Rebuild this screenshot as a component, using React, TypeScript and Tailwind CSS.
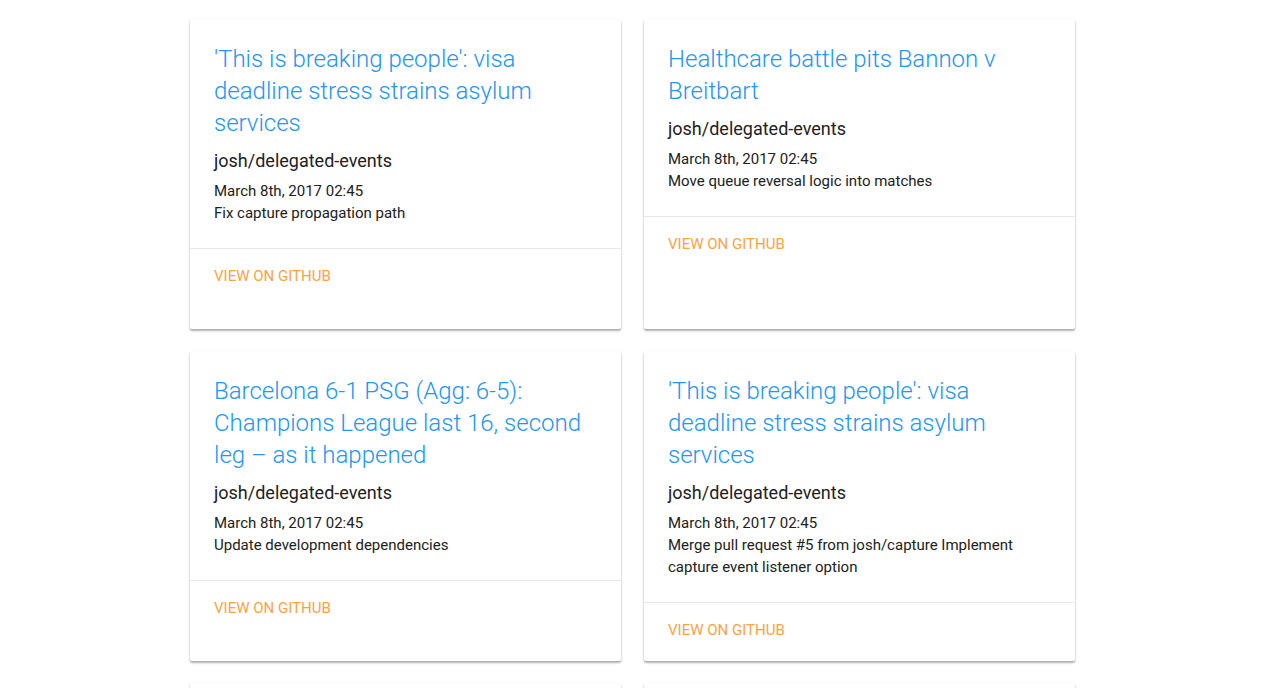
import React from "react";

type Commit = {
  title: string;
  repo: string;
  date: string;
  message: string;
};

const commits: Commit[] = [
  {
    title: "'This is breaking people': visa deadline stress strains asylum services",
    repo: "josh/delegated-events",
    date: "March 8th, 2017 02:45",
    message: "Fix capture propagation path",
  },
  {
    title: "Healthcare battle pits Bannon v Breitbart",
    repo: "josh/delegated-events",
    date: "March 8th, 2017 02:45",
    message: "Move queue reversal logic into matches",
  },
  {
    title: "Barcelona 6-1 PSG (Agg: 6-5): Champions League last 16, second leg – as it happened",
    repo: "josh/delegated-events",
    date: "March 8th, 2017 02:45",
    message: "Update development dependencies",
  },
  {
    title: "'This is breaking people': visa deadline stress strains asylum services",
    repo: "josh/delegated-events",
    date: "March 8th, 2017 02:45",
    message: "Merge pull request #5 from josh/capture Implement capture event listener option",
  },
  {
    title: "Healthcare battle pits Bannon v Breitbart",
    repo: "josh/delegated-events",
    date: "March 8th, 2017 02:45",
    message: "Move queue reversal logic into matches",
  },
  {
    title: "Barcelona 6-1 PSG (Agg: 6-5): Champions League last 16, second leg – as it happened",
    repo: "josh/delegated-events",
    date: "March 8th, 2017 02:45",
    message: "Update development dependencies",
  },
];

function CommitCard({ commit }: { commit: Commit }) {
  return (
    <div className="flex flex-col min-h-[310px] bg-white rounded-[2px] shadow-[0_1px_3px_rgba(0,0,0,0.12),0_2px_2px_rgba(0,0,0,0.26)]">
      <div className="px-6 pt-6 pb-[24px]">
        <h2 className="text-[24px] leading-[32px] font-light text-[#2196f3]">{commit.title}</h2>
        <h3 className="mt-[10px] text-[18px] leading-[24px] text-[#212121]">{commit.repo}</h3>
        <div className="mt-[7px] text-[15px] leading-[22px] text-[#212121]">
          <p>{commit.date}</p>
          <p>{commit.message}</p>
        </div>
      </div>
      <div className="border-t border-[#e8e8e8] px-6 pt-[17px] pb-[21px] flex-1">
        <a href="#" className="block text-[15px] leading-[20px] font-normal uppercase text-[#ffa23f]">
          View on GitHub
        </a>
      </div>
    </div>
  );
}

export default function App() {
  return (
    <div className="min-h-screen bg-white" style={{ fontFamily: "Roboto, 'Liberation Sans', sans-serif" }}>
      <div className="mx-auto w-[885px] pt-[19px] pb-6 grid grid-cols-2 gap-x-[23px] gap-y-[22px]">
        {commits.map((commit, i) => (
          <CommitCard key={i} commit={commit} />
        ))}
      </div>
    </div>
  );
}
